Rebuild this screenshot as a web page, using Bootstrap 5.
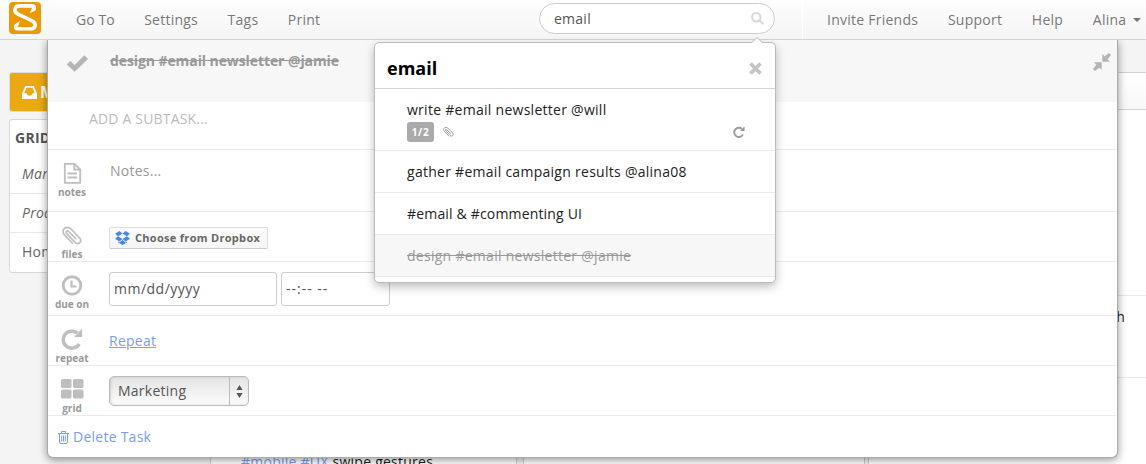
<!DOCTYPE html>
<html lang="en">
<head>
<meta charset="utf-8">
<meta name="viewport" content="width=device-width, initial-scale=1">
<title>Tasks</title>
<link rel="stylesheet" href="https://cdn.jsdelivr.net/npm/bootstrap@5.3.0/dist/css/bootstrap.min.css">
<style>
body{font:14px/20px "Open Sans",sans-serif;letter-spacing:.25px;color:#555;background:#f4f4f4;height:464px;overflow:hidden}
svg{display:block;flex:none}
a{color:#7a9cf5}
/* top bar */
.topbar{height:40px;padding:0;background:linear-gradient(#fdfdfd,#f5f5f5);border-bottom:1px solid #d4d4d4;z-index:5}
.topbar .nav-link{padding:0;color:#777;line-height:20px;text-shadow:0 1px 0 #fff}
.brandmark{margin-left:9px;width:67px;margin-top:-3px}
.menu-left{gap:29.5px;width:463px}
.menu-left .nav-link:first-child{letter-spacing:.05px}
.searchbox{width:236px;height:31px;border:1px solid #ccc;border-radius:16px;background:#fff;padding:0 10px 0 14px;margin-top:-2px}
.menu-right{margin-left:27px;height:39px;border-left:1px solid #fff;padding-left:24px;gap:29.7px}
.caret{border:4px solid transparent;border-top-color:#777;border-bottom:0;margin-left:7px}
/* page behind the task */
.sidebar{width:168px;margin:32px 34px 0 9px}
.mine{height:40px;background:#eaa812;border:1px solid #ddd;border-radius:3px;color:#fff;font-size:16px;padding-left:12px;gap:3px}
.gridbox{margin-top:7px;height:154px;background:#fff;border:1px solid #d8d8d8;border-radius:3px}
.gridbox h6{font-size:14px;line-height:36px;height:35px;margin:0;padding-left:5px;font-weight:700;color:#555}
.gridbox div{height:39px;line-height:38px;border-bottom:1px solid #e8e8e8;padding-left:12px;color:#666}
.gridbox div:last-child{border:0}
.gridcol{margin-top:32px;height:400px;background:#fff;border:1px solid #d0d0d0;border-bottom:0}
.gridcol header{height:37px;background:linear-gradient(#fff,#f8f8f8);border-bottom:1px solid #d4d4d4}
/* open task */
.task{left:47px;top:40px;width:1071px;height:418px;background:#fff;border:1px solid #aaa;border-top:0;border-radius:0 0 6px 6px;box-shadow:0 2px 9px rgba(0,0,0,.42);z-index:2}
.task-head{height:62px;background:#f7f7f7;padding:11px 6px 0 19px}
.task-head del{margin-left:22px;color:#999;font-weight:700;letter-spacing:-.09px}
.trow{border-bottom:1px solid #ebebeb;padding-right:2px;margin-right:1px}
.tlabel{width:48px;padding-top:12px;font-size:10px;line-height:12px;font-weight:700;letter-spacing:0;color:#999}
.tlabel svg{margin:0 auto}
.tbody{padding-left:13px}
.subtask{height:48px;padding:7px 0 0 41px;color:#bbb;letter-spacing:.18px}
.dropbtn{width:159px;height:22px;border:1px solid #ddd;border-bottom-color:#ccc;border-radius:2px;background:linear-gradient(#fcfcfc,#f5f5f5);padding-left:5px;font-size:11px;font-weight:700;letter-spacing:.3px;gap:5px;color:#666}
.field{height:34px;border:1px solid #ccc;border-radius:3px;padding-left:4px;background:#fff;color:#555}
.picker{width:140px;height:30px;border:1px solid #bbb;border-radius:5px;background:linear-gradient(#e4e4e4,#fbfbfb);box-shadow:inset 1px 0 3px rgba(0,0,0,.13);color:#555;padding-left:8px}
.picker span{height:28px;width:19px;border-left:1px solid #bbb}
/* search results */
.results{left:374px;top:42px;width:402px;height:241px;background:#fff;border:1px solid #bbb;border-radius:5px;box-shadow:0 4px 10px rgba(0,0,0,.25);z-index:10;color:#222}
.results .tip{top:-6px;right:12px}
.results h5{font-size:18px;font-weight:700;letter-spacing:0;line-height:20px;color:#000;margin:5px 0 0}
.rhead{height:46px;border-bottom:1px solid #d4d4d4;padding:0 13px 0 12px}
.hit{height:42px;border-bottom:1px solid #ebebeb;padding:0 30px 0 32px;letter-spacing:.275px}
.hit.tall{height:62px;padding-top:11px}
.hit.done{background:#f7f7f7;color:#999}
.count{width:27px;height:20px;border-radius:3px;background:#aaa;color:#fff;font-size:10px;line-height:20px;font-weight:700;letter-spacing:.7px;text-align:center}
</style>
</head>
<body>
<svg width="0" height="0" class="position-absolute">
  <symbol id="clip" viewBox="0 0 20 22"><path d="M13.5 14 7.2 6.3C5.6 4.6 3.700 6.500 5 8.200L12.700 17.800C15.400 20.800 20 17.400 17.600 13.900L9.600 4C5.500-.7-1.200 4 2.600 9.200L9.800 18.300" transform="rotate(-5 10 11)" fill="none" stroke="currentColor" stroke-width="1.7" stroke-linecap="round"/></symbol>
  <symbol id="again" viewBox="0 0 22 22"><path d="M16.300 5.200A8.500 8.500 0 1 0 18.200 15.800" fill="none" stroke="currentColor" stroke-width="3.500"/><path d="M21.200 .8V9H13L15.500 6.500 18 3.800Z" fill="currentColor"/></symbol>
</svg>

<nav class="topbar d-flex align-items-center position-relative">
  <a class="brandmark" href="#"><svg width="32" height="32" viewBox="9 2 32 32"><rect x="9" y="2" width="32" height="32" rx="4" fill="#eb9a05"/><path d="M34 8.500Q35 5.900 32 5.900H19.500C14.500 5.900 13.500 11.300 17 13.600L32.500 21C37 24 35.500 28.800 31 28.800H17.800Q14.500 28.500 16 26" fill="none" stroke="#fff" stroke-width="3.600" stroke-linejoin="round"/><path d="M36 6.500 35.500 10.500 29.800 13.300 32 8ZM14 28 14.500 24.500 20 21 18 26.500Z" fill="#fff"/></svg></a>
  <div class="menu-left nav flex-nowrap">
    <a class="nav-link" href="#">Go To</a><a class="nav-link" href="#">Settings</a><a class="nav-link" href="#">Tags</a><a class="nav-link" href="#">Print</a>
  </div>
  <div class="searchbox d-flex align-items-center justify-content-between"><span>email</span>
    <svg width="13" height="13" viewBox="0 0 13 13" fill="none" stroke="#d8d8d8" stroke-width="2"><circle cx="5.300" cy="5.300" r="4.200"/><path d="m8.400 8.400 3.900 3.900"/></svg>
  </div>
  <div class="menu-right nav flex-nowrap align-items-center">
    <a class="nav-link" href="#">Invite Friends</a><a class="nav-link" href="#">Support</a><a class="nav-link" href="#">Help</a><a class="nav-link d-flex align-items-center" href="#">Alina<span class="caret"></span></a>
  </div>
</nav>

<div class="d-flex">
  <aside class="sidebar flex-shrink-0">
    <div class="mine d-flex align-items-center fw-bold"><svg width="15" height="13" viewBox="0 0 15 13"><path d="M3.300 0h8.400L15 7.500V13H0V7.500ZM4.500 1.800 2.300 7.300H4.600L5.700 9.600H9.300L10.400 7.300H12.700L10.500 1.800Z" fill="#fff" fill-rule="evenodd"/></svg>My</div>
    <div class="gridbox"><h6>GRIDS</h6><div class="fst-italic">Marketing</div><div class="fst-italic">Product</div><div>Home</div></div>
  </aside>
  <main class="d-flex flex-shrink-0">
    <section class="gridcol" style="width:307px;margin-right:6px;margin-left:-1px"><header></header><div style="padding:342px 0 0 30px;color:#222"><a class="text-decoration-none" href="#">#mobile #UX</a> swipe gestures</div></section>
    <section class="gridcol" style="width:342px;margin-right:3px"><header></header></section>
    <section class="gridcol" style="width:300px"><header></header><div style="height:186px;border-bottom:1px solid #e8e8e8"></div><div style="height:82px;border-bottom:1px solid #e8e8e8;padding:11px 42px 0 0;text-align:right;color:#222">h</div></section>
  </main>
</div>

<section class="task position-absolute">
  <div class="task-head d-flex align-items-start">
    <svg width="21" height="17" viewBox="0 0 21 17" style="margin-top:4px"><path d="M0 9.500 3.200 6.300 7.700 10.300 17.300.600 20.800 3.900 7.700 16.500Z" fill="#b5b5b5" stroke="#b5b5b5" stroke-width=".5" stroke-linejoin="round"/></svg>
    <del>design #email newsletter @jamie</del>
    <svg class="ms-auto" width="18" height="18" viewBox="0 0 18 18" style="margin-top:2px" fill="#b5b5b5"><path d="M9.300 8.700V1L11.700 3.200 16 0 18 2.100 14.600 6.300 17 8.700ZM8.700 9.300V17L6.300 14.800 2 18 0 15.900 3.400 11.700 1 9.300Z"/></svg>
  </div>
  <div class="trow subtask">ADD A SUBTASK...</div>
  <div class="trow d-flex" style="height:62px">
    <div class="tlabel text-center"><svg width="24" height="24" viewBox="0 0 24 24" fill="none" stroke="#bfbfbf" stroke-width="1.800"><path d="M4.800 1.900H14.500L20.200 7.500V20.900H4.800ZM14.300 2V7.700H20M7.500 11.500H17M7.500 15.500H17"/></svg>notes</div>
    <div class="tbody" style="padding:11px 0 0 14px;color:#999">Notes...</div>
  </div>
  <div class="trow d-flex" style="height:50px">
    <div class="tlabel text-center"><svg width="24" height="24" viewBox="0 0 24 24" color="#bfbfbf"><use href="#clip" x="2" y="1" width="20" height="22"/></svg>files</div>
    <div class="tbody" style="padding-top:15px"><div class="dropbtn d-flex align-items-center"><svg width="15" height="14" viewBox="0 0 15 14" fill="#4a86f0"><path d="M4.400 0 7.500 2.400 3.100 5.200 0 2.700ZM10.600 0 7.500 2.400 11.900 5.200 15 2.700ZM0 7.700 3.100 5.200 7.500 8 4.400 10.500ZM15 7.700 11.900 5.200 7.500 8 10.600 10.500ZM7.500 8.900 10.600 11.400 12 10.500V11.500L7.500 14 3 11.500V10.500L4.400 11.400Z"/></svg>Choose from Dropbox</div></div>
  </div>
  <div class="trow d-flex" style="height:54px">
    <div class="tlabel text-center"><svg width="24" height="24" viewBox="0 0 24 24" fill="none" stroke="#bfbfbf"><circle cx="12" cy="11.500" r="8.800" stroke-width="2.900"/><path d="M11.500 6.500V12.500H16.500" stroke-width="2.200"/></svg>due on</div>
    <div class="tbody d-flex" style="padding-top:10px;gap:4px"><div class="field d-flex align-items-center" style="width:168px;letter-spacing:.5px">mm/dd/yyyy</div><div class="field d-flex align-items-center" style="width:109px;letter-spacing:1px">--:-- --</div></div>
  </div>
  <div class="trow d-flex" style="height:50px">
    <div class="tlabel text-center"><svg width="24" height="24" viewBox="0 0 24 24" color="#bfbfbf"><use href="#again" x="1" y="0" width="22" height="22"/></svg>repeat</div>
    <div class="tbody" style="padding-top:15px"><a href="#">Repeat</a></div>
  </div>
  <div class="trow d-flex" style="height:50px">
    <div class="tlabel text-center"><svg width="24" height="24" viewBox="0 0 24 24" fill="#bfbfbf"><rect x="1" y="1" width="10.500" height="9" rx="1.500"/><rect x="13" y="1" width="10.500" height="9" rx="1.500"/><rect x="1" y="11.500" width="10.500" height="9" rx="1.500"/><rect x="13" y="11.500" width="10.500" height="9" rx="1.500"/></svg>grid</div>
    <div class="tbody" style="padding-top:10px"><div class="picker d-flex align-items-center justify-content-between">Marketing<span class="d-flex align-items-center justify-content-center"><svg width="7" height="13" viewBox="0 0 7 13" fill="#555"><path d="M3.500 0 6.600 5H.4ZM3.500 13 .4 8H6.600Z"/></svg></span></div></div>
  </div>
  <a class="d-flex align-items-center text-decoration-none" href="#" style="height:42px;padding-left:10px;gap:4px"><svg width="11" height="13" viewBox="0 0 11 13" fill="none" stroke="#7a9cf5"><path d="M0 2.500H11M3.500 2.300V.5H7.500V2.300M1.500 2.500V11Q1.500 12.500 3 12.500H8Q9.500 12.500 9.500 11V2.500M3.700 4.500V10.500M5.500 4.500V10.500M7.300 4.500V10.500"/></svg>Delete Task</a>
</section>

<section class="results position-absolute">
  <svg class="tip position-absolute" width="12" height="7" viewBox="0 0 12 7"><path d="M0 6.500 6 .6 12 6.500V7H0Z" fill="#fff"/><path d="M0 6 6 .5 12 6" fill="none" stroke="#bbb"/></svg>
  <div class="rhead d-flex align-items-center justify-content-between"><h5>email</h5><svg width="13" height="13" viewBox="0 0 13 13" style="margin-top:6px"><path d="m1.500 1.500 10 10m0-10-10 10" stroke="#c4c4c4" stroke-width="3.800"/></svg></div>
  <div class="hit tall">write #email newsletter @will
    <div class="d-flex align-items-center" style="margin-top:2px"><span class="count">1/2</span><svg width="11" height="12" color="#999" style="margin-left:9px"><use href="#clip" width="11" height="12"/></svg><svg class="ms-auto" width="12" height="12" color="#999"><use href="#again" width="12" height="12"/></svg></div>
  </div>
  <div class="hit d-flex align-items-center">gather #email campaign results @alina08</div>
  <div class="hit d-flex align-items-center" style="letter-spacing:.17px">#email &amp; #commenting UI</div>
  <div class="hit done d-flex align-items-center"><del>design #email newsletter @jamie</del></div>
</section>
<script src="https://cdn.jsdelivr.net/npm/bootstrap@5.3.0/dist/js/bootstrap.bundle.min.js"></script>
</body>
</html>
